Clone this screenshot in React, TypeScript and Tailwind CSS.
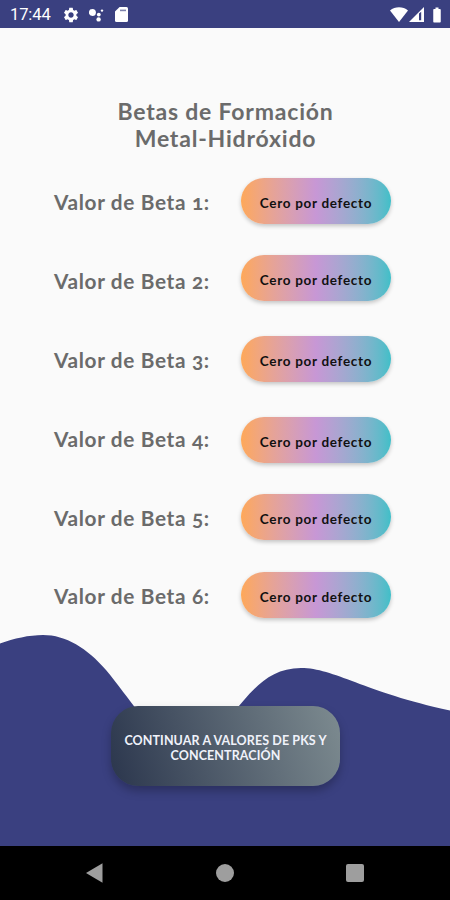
import { MdSettings, MdBatteryFull } from 'react-icons/md';

const labels = [1, 2, 3, 4, 5, 6];

const buttonOffsets = ['mt-0', 'mt-[31px]', 'mt-[35.4px]', 'mt-[35px]', 'mt-[31px]', 'mt-[31.4px]'];

function StatusBar() {
  return (
    <header className="flex h-[28px] shrink-0 items-center bg-[#3a4080] pt-px pl-[10px] pr-[4px] text-white">
      <span className="w-[52px] pt-[2px] font-['Roboto',sans-serif] text-[16.5px] leading-none tracking-[-0.1px]">17:44</span>
      <MdSettings className="size-[18px]" />
      <svg className="ml-[9px] h-4 w-[17px]" viewBox="0 0 17 16" fill="currentColor">
        <circle cx="3.4" cy="5.4" r="3.5" />
        <circle cx="9.8" cy="7.6" r="1.9" />
        <circle cx="13" cy="3.6" r="1.2" />
        <circle cx="9.6" cy="12.4" r="2.2" />
      </svg>
      <svg className="ml-[9px] h-[15px] w-[13px]" viewBox="0 0 13 15">
        <path d="M4.6 0H11.5Q13 0 13 1.5V13.5Q13 15 11.5 15H1.5Q0 15 0 13.5V4.6Z" fill="white" />
        <path d="M5 2.6h6v1.6H5Z" fill="#3a4080" opacity=".65" />
      </svg>
      <div className="flex-1" />
      <svg className="h-[15px] w-[18px]" viewBox="0 0 18 15">
        <path d="M0 3.6C5 -.8 13 -.8 18 3.6L9 15Z" fill="white" />
      </svg>
      <svg className="ml-px h-[15px] w-[15px]" viewBox="0 0 15 15">
        <path d="M0 15 15 0V15Z" fill="white" />
        <path d="M10 6.6v6.6h2.2V4.8Z" fill="#3a4080" />
      </svg>
      <MdBatteryFull className="ml-[4px] size-[18px]" />
    </header>
  );
}

function NavigationBar() {
  return (
    <nav className="flex h-[54px] shrink-0 items-center justify-between bg-black pr-[86px] pl-[86px] text-[#9e9e9e]">
      <svg className="h-5 w-[17px]" viewBox="0 0 17 20" fill="currentColor">
        <path d="M0 10 16.5.3v19.4Z" />
      </svg>
      <div className="size-[18px] rounded-full bg-[#9e9e9e]" />
      <div className="size-[18px] rounded-[2px] bg-[#9e9e9e]" />
    </nav>
  );
}

export default function App() {
  return (
    <div className="relative flex h-[900px] w-[450px] flex-col overflow-hidden bg-[#fafafa] font-['Lato',sans-serif]">
      <StatusBar />
      <main className="relative flex flex-1 flex-col">
        <svg className="absolute bottom-0 left-0 h-[216px] w-[450px]" viewBox="0 630 450 216">
          <path
            d="M0 643.5C14 638.5 29 635 43 635C66 635 87 648 106 670C117 683 129 700 140 714L232 714C249 695 266 668 301 668C334 668 364 692 450 710.5V846H0Z"
            fill="#3a4080"
          />
        </svg>
        <h1 className="mt-[70px] pl-px text-center text-[23px] leading-[27px] font-bold tracking-[0.8px] text-[#6b6b6b]">
          Betas de Formación
          <br />
          Metal-Hidróxido
        </h1>
        <section className="mt-[26px] flex justify-between pr-[59px] pl-[54px]">
          <div className="mt-[4.4px] flex flex-col gap-[38.8px]">
            {labels.map((n) => (
              <div key={n} className="h-10 text-[20.8px] leading-10 font-bold tracking-[0.65px] whitespace-nowrap text-[#6b6b6b] oldstyle-nums">
                Valor de Beta {n}:
              </div>
            ))}
          </div>
          <div className="flex flex-col">
            {buttonOffsets.map((offset, i) => (
              <button
                key={i}
                className={`${offset} h-[46px] w-[150px] rounded-full bg-linear-to-r from-[#fea858] via-[#c797d5] to-[#3fbfc8] pt-[4px] text-[13.5px] font-bold tracking-[0.7px] text-[#111] shadow-[0_2px_4px_rgba(0,0,0,0.22)]`}
              >
                Cero por defecto
              </button>
            ))}
          </div>
        </section>
        <button className="relative mt-[88px] ml-[111px] h-[80px] w-[229px] rounded-[27px] bg-linear-[72deg] from-[#2b364d] to-[#7d8b90] pt-[4px] text-[12.5px] leading-[15px] font-bold tracking-[0.1px] text-[#f0f2fa] shadow-[0_5px_10px_rgba(0,0,0,0.25)]">
          CONTINUAR A VALORES DE PKS Y
          <br />
          CONCENTRACIÓN
        </button>
      </main>
      <NavigationBar />
    </div>
  );
}
